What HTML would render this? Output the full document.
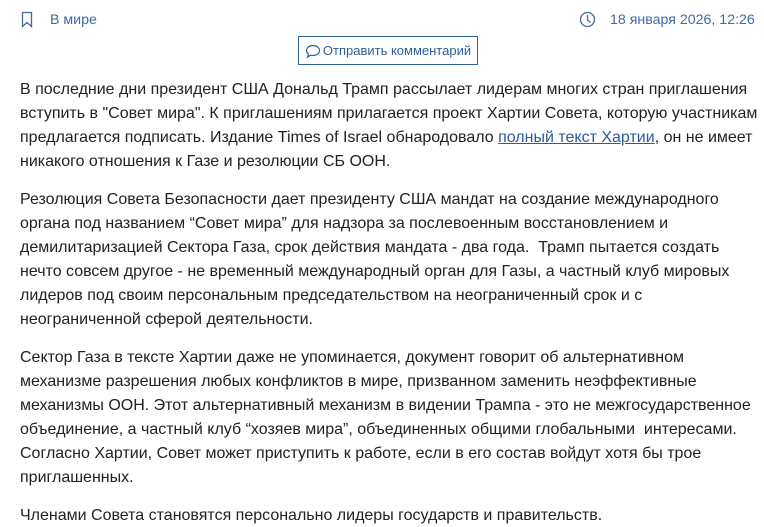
<!DOCTYPE html>
<html><head><meta charset="utf-8"><style>
html,body{margin:0;padding:0;background:#fff;width:764px;height:527px;overflow:hidden}
body{font-family:"Liberation Sans",Arial,sans-serif;color:#222;position:relative}
.hdr{position:absolute;top:10px;font-size:14.2px;color:#3f6aa3;line-height:20px}
.btn{position:absolute;left:298px;top:36px;width:178px;height:27px;border:1px solid #2e5f95;box-sizing:content-box;color:#2e5f95;font-size:13px;line-height:27px;text-align:center}
.txt{position:absolute;left:20px;top:78px;width:750px;font-size:16px;line-height:24px;white-space:nowrap}
.txt p{margin:0 0 14px 0}
a{color:#2a5b9c;text-decoration:underline}
</style></head><body>
<svg style="position:absolute;left:21px;top:11px" width="12" height="17" viewBox="0 0 12 17"><path d="M1.5 1.5h9v14l-4.5-4-4.5 4z" fill="none" stroke="#3f6aa3" stroke-width="1.3"/></svg>
<div class="hdr" style="left:50px">В мире</div>
<svg style="position:absolute;left:579px;top:11px" width="17" height="17" viewBox="0 0 17 17"><circle cx="8.5" cy="8.5" r="7" fill="none" stroke="#3f6aa3" stroke-width="1.3"/><path d="M8.5 4v5l3 2.5" fill="none" stroke="#3f6aa3" stroke-width="1.3"/></svg>
<div class="hdr" style="left:610px">18 января 2026, 12:26</div>
<div class="btn"><svg style="vertical-align:-4px;margin-right:2px" width="16" height="16" viewBox="0 0 16 16"><path d="M8 2.5c3.6 0 6.5 2.2 6.5 5s-2.9 5-6.5 5c-.8 0-1.600-.1-2.3-.3L2.5 14l.9-3C2.2 10 1.5 8.8 1.5 7.5c0-2.8 2.9-5 6.5-5z" fill="none" stroke="#2e5f95" stroke-width="1.2"/></svg>Отправить комментарий</div>
<div class="txt">
<p>В последние дни президент США Дональд Трамп рассылает лидерам многих стран приглашения<br>вступить в "Совет мира". К приглашениям прилагается проект Хартии Совета, которую участникам<br>предлагается подписать. Издание Times of Israel обнародовало <a>полный текст Хартии</a>, он не имеет<br>никакого отношения к Газе и резолюции СБ ООН.</p>
<p>Резолюция Совета Безопасности дает президенту США мандат на создание международного<br>органа под названием “Совет мира” для надзора за послевоенным восстановлением и<br>демилитаризацией Сектора Газа, срок действия мандата - два года.&nbsp; Трамп пытается создать<br>нечто совсем другое - не временный международный орган для Газы, а частный клуб мировых<br>лидеров под своим персональным председательством на неограниченный срок и с<br>неограниченной сферой деятельности.</p>
<p>Сектор Газа в тексте Хартии даже не упоминается, документ говорит об альтернативном<br>механизме разрешения любых конфликтов в мире, призванном заменить неэффективные<br>механизмы ООН. Этот альтернативный механизм в видении Трампа - это не межгосударственное<br>объединение, а частный клуб “хозяев мира”, объединенных общими глобальными&nbsp; интересами.<br>Согласно Хартии, Совет может приступить к работе, если в его состав войдут хотя бы трое<br>приглашенных.</p>
<p>Членами Совета становятся персонально лидеры государств и правительств.</p>
</div>
</body></html>
